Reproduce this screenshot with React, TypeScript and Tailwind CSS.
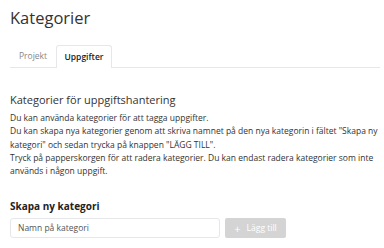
import React from "react";

export default function App() {
  return (
    <div className="w-[384px] h-[248px] bg-white overflow-hidden text-[#333]" style={{ fontFamily: '"Open Sans", "Noto Sans", sans-serif' }}>
      <div className="pl-[10px] pr-[4px] pt-[8px]">
        <h1 className="text-[16.5px] leading-[20px] text-[#333]">Kategorier</h1>
        <div className="mt-[17px] flex border-b border-[#e5e7eb] h-[23px]">
          <div className="w-[46px] flex items-center justify-center text-[8.5px] text-[#888]">Projekt</div>
          <div className="w-[56px] flex items-center justify-center text-[8.5px] font-semibold text-[#222] border border-b-0 border-[#e5e7eb] rounded-t-[3px] bg-white -mb-px">Uppgifter</div>
        </div>
        <h2 className="mt-[24px] text-[11px] leading-[16px] text-[#333]">Kategorier för uppgiftshantering</h2>
        <div className="mt-[3px] text-[8.5px] leading-[13.3px] text-[#333] whitespace-nowrap">
          <p>Du kan använda kategorier för att tagga uppgifter.</p>
          <p>
            Du kan skapa nya kategorier genom att skriva namnet på den nya kategorin i fältet "Skapa ny
            <br />
            kategori" och sedan trycka på knappen "LÄGG TILL".
          </p>
          <p>
            Tryck på papperskorgen för att radera kategorier. Du kan endast radera kategorier som inte
            <br />
            används i någon uppgift.
          </p>
        </div>
        <h3 className="mt-[22px] text-[10px] leading-[14px] font-bold text-[#222]">Skapa ny kategori</h3>
        <div className="mt-[5px] flex gap-[5px]">
          <div className="w-[210px] h-[20px] border border-[#e5e7eb] rounded-[3px] flex items-center px-[7px] text-[8.5px] text-[#555]">Namn på kategori</div>
          <div className="w-[61px] h-[20px] bg-[#d4d4d4] rounded-[2px] flex items-center justify-center gap-[6px] text-[8.5px] text-white">
            <span className="text-[11px] leading-none">+</span>
            <span>Lägg till</span>
          </div>
        </div>
      </div>
    </div>
  );
}
